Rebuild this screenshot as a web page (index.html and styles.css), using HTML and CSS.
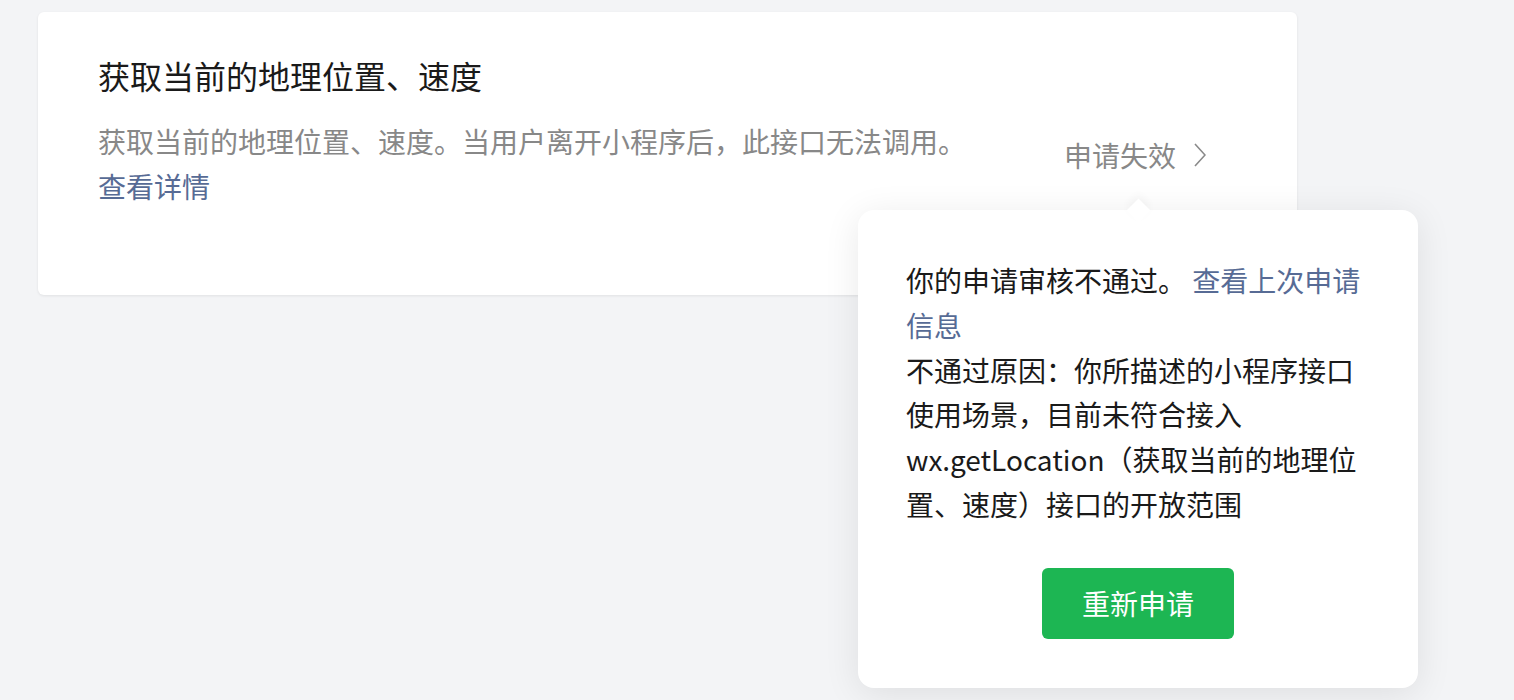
FILE: index.html
```html
<!DOCTYPE html>
<html lang="zh-CN">
<head>
<meta charset="utf-8">
<title>接口权限</title>
<link rel="stylesheet" href="styles.css">
</head>
<body>
<div class="page">
  <div class="card">
    <div class="card-main">
      <div class="card-title">获取当前的地理位置、速度</div>
      <div class="card-desc">获取当前的地理位置、速度。当用户离开小程序后，此接口无法调用。</div>
      <a class="link card-link" href="#">查看详情</a>
    </div>
    <div class="status">
      <span>申请失效</span>
      <svg class="chevron" width="12" height="24" viewBox="0 0 12 24"><path d="M1 1 L11 12 L1 23" fill="none" stroke="#8a8a8a" stroke-width="1.6"/></svg>
    </div>
  </div>
  <div class="tooltip">
    <p class="tip-line">你的申请审核不通过。 <a class="link" href="#">查看上次申请信息</a></p>
    <p class="tip-line">不通过原因：你所描述的小程序接口使用场景，目前未符合接入wx.getLocation（获取当前的地理位置、速度）接口的开放范围</p>
    <button class="btn-primary" type="button">重新申请</button>
  </div>
</div>
</body>
</html>
```
FILE: styles.css
```css
* { box-sizing: border-box; }
html, body { margin: 0; padding: 0; }
body {
  background: #f3f4f6;
  font-family: "Noto Sans CJK SC", "Noto Sans", sans-serif;
  width: 1514px;
  height: 700px;
  overflow: hidden;
}
.page {
  position: relative;
  padding: 12px 0 0 38px;
  height: 700px;
}
.card {
  width: 1259px;
  min-height: 283px;
  background: #fff;
  border-radius: 6px;
  box-shadow: 0 1px 3px rgba(0, 0, 0, 0.08);
  display: flex;
  padding: 40px 93px 37px 60px;
}
.card-main {
  flex: 1;
  min-width: 0;
}
.card-title {
  font-size: 32px;
  line-height: 46px;
  color: #1a1a1a;
}
.card-desc {
  margin-top: 21px;
  font-size: 28px;
  line-height: 44.8px;
  color: #888;
}
.link {
  color: #576b95;
  text-decoration: none;
}
.card-link {
  display: block;
  font-size: 28px;
  line-height: 44.8px;
}
.status {
  align-self: center;
  display: flex;
  align-items: center;
  gap: 18px;
  margin-right: -2px;
  font-size: 28px;
  line-height: 44.8px;
  color: #888;
}
.chevron { display: block; }
.tooltip {
  position: absolute;
  left: 858px;
  top: 210px;
  width: 560px;
  background: #fff;
  border-radius: 16px;
  box-shadow: 0 6px 36px rgba(0, 0, 0, 0.09);
  padding: 48px 48px 49px;
  display: flex;
  flex-direction: column;
}
.tooltip::before {
  content: "";
  position: absolute;
  top: -8px;
  left: 50%;
  width: 17px;
  height: 17px;
  margin-left: -8.5px;
  background: #fff;
  transform: rotate(45deg);
  box-shadow: -3px -3px 8px rgba(0, 0, 0, 0.04);
}
.tip-line {
  margin: 0;
  font-size: 28px;
  line-height: 44.8px;
  color: #1a1a1a;
}
.btn-primary {
  align-self: center;
  margin-top: 41px;
  width: 192px;
  height: 71px;
  border: none;
  border-radius: 6px;
  background: #1db653;
  color: #fff;
  font-family: inherit;
  font-size: 28px;
  padding: 0;
  display: flex;
  align-items: center;
  justify-content: center;
}
```
